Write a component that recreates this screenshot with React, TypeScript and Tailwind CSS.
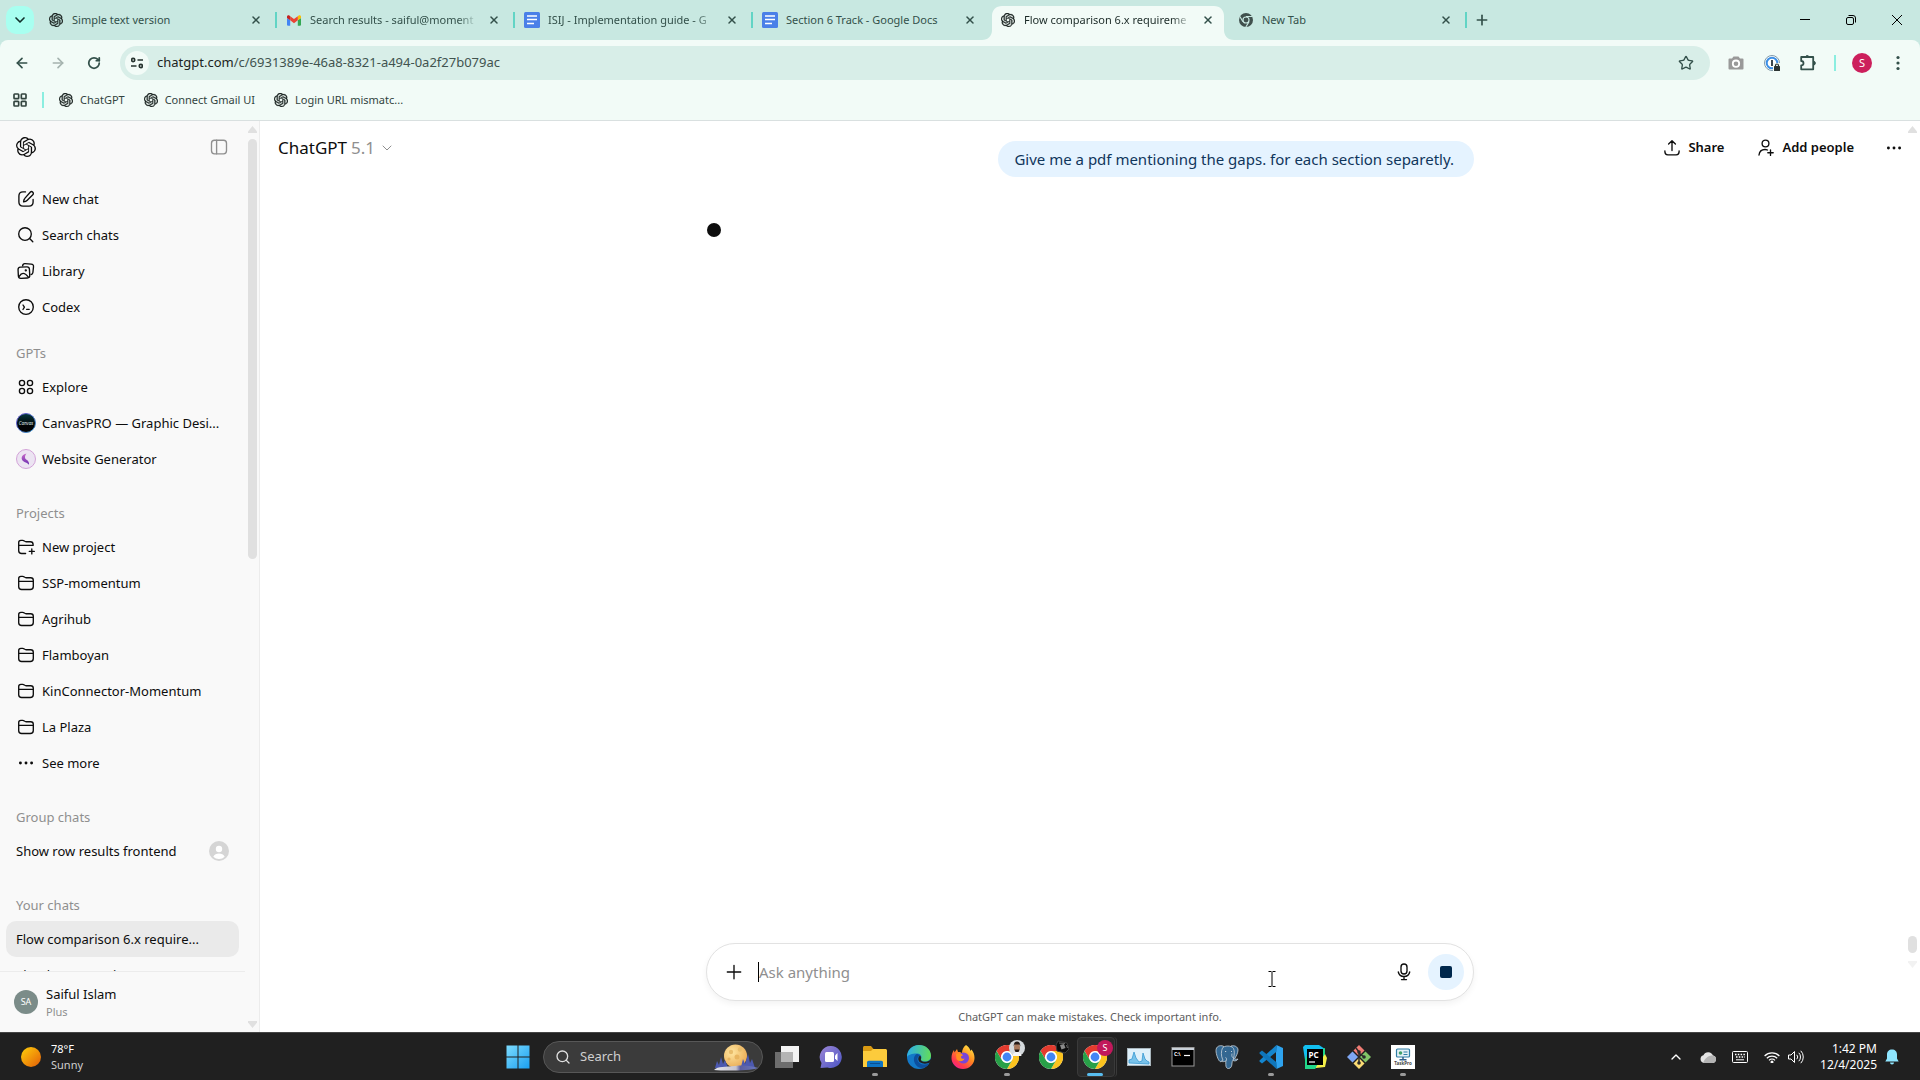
import type { ReactNode } from 'react';
import {
  ArrowLeft,
  ArrowRight,
  ChevronDown,
  ChevronUp,
  LayoutGrid,
  Plus,
  RotateCw,
  Search,
  Star,
  X,
} from 'lucide-react';
import { SiOpenai } from 'react-icons/si';

/* ---------- favicons and brand marks ---------- */

const GmailIcon = () => (
  <svg viewBox="0 0 24 18" className="w-[14px] h-[11px]">
    <path d="M1.6 18h3.9V8.7L0 4.5v11.9C0 17.3.7 18 1.6 18z" fill="#4285f4" />
    <path d="M18.5 18h3.9c.9 0 1.6-.7 1.6-1.6V4.5l-5.5 4.2z" fill="#34a853" />
    <path d="M18.5 1.7v7L24 4.5v-2c0-2.1-2.3-3.2-4-2z" fill="#fbbc04" />
    <path d="M5.5 8.7v-7L12 6.500l6.500-4.800v7L12 13.600z" fill="#ea4335" />
    <path d="M0 2.500v2l5.500 4.200v-7L4 .5c-1.700-1.200-4-.1-4 2z" fill="#c5221f" />
  </svg>
);

const DocsIcon = () => (
  <svg viewBox="0 0 16 16" className="w-4 h-4">
    <rect width="16" height="16" rx="1.500" fill="#4a80e8" />
    <path d="M3 4h10M3 7.500h10M3 11.500h7" stroke="#fff" strokeWidth="1.700" />
  </svg>
);

const MonoChromeIcon = () => (
  <svg viewBox="0 0 24 24" className="w-[14px] h-[14px]">
    <circle cx="12" cy="12" r="12" fill="#40504d" />
    <circle cx="12" cy="12" r="5.200" fill="none" stroke="#c8e8e1" strokeWidth="2" />
    <path d="M12 6h11M6.800 15L1.500 6M17.200 15l-5.500 9" stroke="#c8e8e1" strokeWidth="2" />
  </svg>
);

const OpenAiIcon = ({ large = false }: { large?: boolean }) => (
  <SiOpenai className={large ? 'w-5 h-5 text-[#0d0d0d]' : 'w-[14px] h-[14px] text-[#1d2624] stroke-[#1d2624] stroke-[0.6px]'} />
);

const ChromeLogo = () => (
  <svg viewBox="0 0 24 24" className="w-6 h-6">
    <circle cx="12" cy="12" r="12" fill="#fff" />
    <path d="M12 6h10.400A12 12 0 0 0 1.600 6L6.800 15A6 6 0 0 1 12 6z" fill="#e33b2e" />
    <path d="M17.200 15L12 24A12 12 0 0 0 22.400 6H12a6 6 0 0 1 5.200 9z" fill="#fcc31e" />
    <path d="M6.800 15L1.600 6A12 12 0 0 0 12 24l5.200-9a6 6 0 0 1-10.400 0z" fill="#28a048" />
    <circle cx="12" cy="12" r="5.500" fill="#fff" />
    <circle cx="12" cy="12" r="4.400" fill="#4285f4" />
  </svg>
);

/* ---------- sidebar icons, all on a 20px grid ---------- */

const Glyph = ({ children }: { children: ReactNode }) => (
  <svg
    viewBox="0 0 20 20"
    className="w-5 h-5 shrink-0"
    fill="none"
    stroke="currentColor"
    strokeWidth="1.350"
    strokeLinecap="round"
    strokeLinejoin="round"
  >
    {children}
  </svg>
);

const NewChatIcon = () => (
  <Glyph>
    <path d="M9.500 2.900H7C4.200 2.900 2.900 4.400 2.900 7v6c0 2.700 1.400 4.100 4.100 4.100h6c2.700 0 4.100-1.400 4.100-4.100v-2.500" />
    <path d="M14.200 3.200a1.800 1.800 0 0 1 2.600 2.600L11 11.600c-.8.800-1.900 1.100-3.400 1.300.1-1.500.4-2.700 1.200-3.500z" />
  </Glyph>
);

const SearchIcon = () => (
  <Glyph>
    <circle cx="9" cy="9" r="6.300" />
    <path d="M13.600 13.600l3.200 3.200" />
  </Glyph>
);

const LibraryIcon = () => (
  <Glyph>
    <path d="M6.600 4.800c.2-1.500.9-2.300 2.400-2.200l6.200.5c1.700.2 2.500 1 2.300 2.700l-.600 5.700c-.1 1.200-.7 1.800-1.800 2" />
    <rect x="2.200" y="6" width="11.400" height="11.200" rx="2.500" transform="rotate(-3 8 11.500)" />
    <path d="M3.200 15.300c2.300-3.600 5-4.300 9.200.8" />
    <circle cx="9.800" cy="9.300" r=".5" fill="currentColor" />
  </Glyph>
);

const CodexIcon = () => (
  <Glyph>
    <circle cx="10" cy="10" r="7.300" />
    <path d="M7 8l1.400 2.200L7 12.500M10.600 12.300h2.600" />
  </Glyph>
);

const ExploreIcon = () => (
  <Glyph>
    <circle cx="6" cy="6" r="2.600" />
    <circle cx="14" cy="6" r="2.600" />
    <circle cx="6" cy="14" r="2.600" />
    <circle cx="14" cy="14" r="2.600" />
  </Glyph>
);

const FolderIcon = () => (
  <Glyph>
    <path d="M2.700 13.800V5.600c0-1.400.8-2.200 2.200-2.200h1.800c1.500 0 1.800 1.300 3.300 1.300h4.700c1.700 0 2.600.9 2.600 2.600v6.100c0 2-1 3.100-3.100 3.100H5.600c-1.900 0-2.900-1-2.900-2.700zM2.900 8.400h14.200" />
  </Glyph>
);

const NewFolderIcon = () => (
  <Glyph>
    <path d="M9.600 16.500H5.600c-1.900 0-2.900-1-2.900-2.700V5.600c0-1.400.8-2.200 2.200-2.200h1.800c1.500 0 1.800 1.300 3.300 1.300h4.300c1.900 0 2.800.9 2.800 2.700v1H2.900" />
    <path d="M15.800 11.900v5M13.300 14.400h5" />
  </Glyph>
);

const DotsIcon = () => (
  <svg viewBox="0 0 20 20" className="w-5 h-5 shrink-0" fill="currentColor">
    <circle cx="4.400" cy="10" r="1.450" />
    <circle cx="10" cy="10" r="1.450" />
    <circle cx="15.600" cy="10" r="1.450" />
  </svg>
);

const CanvasProAvatar = () => (
  <svg viewBox="0 0 20 20" className="w-5 h-5 shrink-0">
    <defs>
      <linearGradient id="canvasRing" x1="0" y1="0" x2="1" y2="1">
        <stop offset="0" stopColor="#6a4fd0" />
        <stop offset="1" stopColor="#3c9ccc" />
      </linearGradient>
      <linearGradient id="canvasFill" x1="0" y1="0" x2="0" y2="1">
        <stop offset="0" stopColor="#053a40" />
        <stop offset=".6" stopColor="#020405" />
      </linearGradient>
    </defs>
    <circle cx="10" cy="10" r="9.500" fill="url(#canvasFill)" stroke="url(#canvasRing)" />
    <text x="10" y="11.500" fontSize="4.500" fontStyle="italic" textAnchor="middle" fill="#dfe6e8">
      Canvas
    </text>
  </svg>
);

const WebsiteAvatar = () => (
  <svg viewBox="0 0 20 20" className="w-5 h-5 shrink-0">
    <defs>
      <linearGradient id="swirl" x1="0" y1="0" x2="0" y2="1">
        <stop offset="0" stopColor="#c86cc8" />
        <stop offset="1" stopColor="#6a2ab0" />
      </linearGradient>
    </defs>
    <circle cx="10" cy="10" r="9.500" fill="#ece4f2" stroke="#d3a3d8" />
    <path d="M10.500 4.500C6.500 5.500 4.800 8.200 6.200 11c1.200 2.500 3.900 1.700 6.800 4.800.3-2.500-.8-4-2.400-5-1.900-1.300-2.300-3.200-.1-6.300z" fill="url(#swirl)" />
  </svg>
);

/* ---------- browser chrome ---------- */

const tabs = [
  { title: 'Simple text version', icon: <OpenAiIcon /> },
  { title: 'Search results - saiful@moment', icon: <GmailIcon />, fade: true },
  { title: 'ISIJ - Implementation guide - G', icon: <DocsIcon />, fade: true },
  { title: 'Section 6 Track - Google Docs', icon: <DocsIcon /> },
  { title: 'Flow comparison 6.x requireme', icon: <OpenAiIcon />, active: true, fade: true },
  { title: 'New Tab', icon: <MonoChromeIcon /> },
];

function TabStrip() {
  return (
    <div className="flex items-center h-10 bg-[#c8e8e1] text-[#33504a]">
      <div className="w-[37px] shrink-0 pl-[6px]">
        <button aria-label="Search tabs" className="flex items-center justify-center w-7 h-7 rounded-[10px] bg-[#a8fff0] text-[#12302b]">
          <ChevronDown className="w-4 h-4" strokeWidth={2.5} />
        </button>
      </div>
      {tabs.map((tab, i) => (
        <div key={tab.title} className="relative flex items-center basis-[238px] min-w-0 h-full">
          {tab.active && (
            <svg viewBox="0 0 252 34" preserveAspectRatio="none" className="absolute -left-[7px] bottom-0 w-[252px] h-[34px]">
              <path
                d="M0 34c6 0 10-4 10-10V10C10 4 14 0 20 0h212c6 0 10 4 10 10v14c0 6 4 10 10 10z"
                fill="#f2fbf7"
              />
            </svg>
          )}
          {i > 0 && !tab.active && !tabs[i - 1].active && (
            <span className="absolute left-0 w-[2px] h-4 bg-[#62d4c5]" />
          )}
          <div className="relative flex items-center w-full px-[11px]">
            <span className="flex items-center justify-center w-4 shrink-0">{tab.icon}</span>
            <span
              className={
                'flex-1 ml-2 mr-2 whitespace-nowrap text-[11px] ' +
                (tab.active ? 'text-[#1b2a27] ' : '') +
                (tab.fade ? '[mask-image:linear-gradient(to_right,black_88%,transparent)]' : '')
              }
            >
              {tab.title}
            </span>
            <button aria-label={`Close ${tab.title}`} className="flex items-center justify-center w-4 h-4 shrink-0">
              <X className="w-3 h-3" strokeWidth={3} />
            </button>
          </div>
        </div>
      ))}
      <span className="w-[2px] h-4 bg-[#62d4c5]" />
      <button aria-label="New tab" className="flex items-center justify-center w-[30px] h-7">
        <Plus className="w-4 h-4" strokeWidth={2.5} />
      </button>
      <div className="flex ml-auto h-full text-black">
        <button aria-label="Minimize" className="flex items-center justify-center w-[46px]">
          <svg viewBox="0 0 10 10" className="w-[10px] h-[10px]"><path d="M0 4.500h10" stroke="currentColor" /></svg>
        </button>
        <button aria-label="Restore" className="flex items-center justify-center w-[46px]">
          <svg viewBox="0 0 10 10" className="w-[10px] h-[10px]" fill="none" stroke="currentColor">
            <rect x=".5" y="2.500" width="7" height="7" rx="1.500" />
            <path d="M2.500.5h4.500a2.500 2.500 0 0 1 2.500 2.500v4.500" />
          </svg>
        </button>
        <button aria-label="Close window" className="flex items-center justify-center w-[46px]">
          <svg viewBox="0 0 10 10" className="w-[10px] h-[10px]"><path d="M0 0l10 10M10 0L0 10" stroke="currentColor" /></svg>
        </button>
      </div>
    </div>
  );
}

function Toolbar() {
  return (
    <div className="flex items-center h-[46px] px-1 bg-[#f2fbf7] rounded-t-[8px] text-[#33504a]">
      <button aria-label="Back" className="flex justify-center w-9"><ArrowLeft className="w-4 h-4" strokeWidth={2.5} /></button>
      <button aria-label="Forward" className="flex justify-center w-9 text-[#a5b3af]"><ArrowRight className="w-4 h-4" strokeWidth={2.5} /></button>
      <button aria-label="Reload" className="flex justify-center w-9"><RotateCw className="w-[14px] h-[14px]" strokeWidth={3} /></button>
      <div className="flex items-center flex-1 h-[34px] ml-2 px-[5px] rounded-full bg-[#d8eee8]">
        <button aria-label="Site information" className="flex items-center justify-center w-6 h-6 rounded-full bg-[#f2fbf7]">
          <svg viewBox="0 0 12 12" className="w-3 h-3" fill="none" stroke="#26332f" strokeWidth="1.600">
            <circle cx="2.200" cy="3" r="1.600" />
            <path d="M6.500 3H12M0 9h5.500" />
            <circle cx="9.800" cy="9" r="1.600" />
          </svg>
        </button>
        <span className="ml-2 text-[13px] text-[#41534f]">
          <span className="text-[#1b2321]">chatgpt.com</span>/c/6931389e-46a8-8321-a494-0a2f27b079ac
        </span>
        <button aria-label="Bookmark this tab" className="ml-auto mr-[11px]"><Star className="w-4 h-4" strokeWidth={2} /></button>
      </div>
      <div className="flex items-center ml-2">
        <button aria-label="Screenshot" className="flex justify-center w-9">
          <svg viewBox="0 0 16 14" className="w-4 h-[14px]">
            <path d="M1.500 2.500H4L5.500.5h5l1.500 2h2.500A1 1 0 0 1 15.500 3.500v9a1 1 0 0 1-1 1h-13a1 1 0 0 1-1-1v-9a1 1 0 0 1 1-1z" fill="#999" />
            <circle cx="8" cy="7.700" r="3.200" fill="none" stroke="#fff" strokeWidth="1.800" />
          </svg>
        </button>
        <button aria-label="Password manager" className="flex justify-center w-9">
          <svg viewBox="0 0 16 16" className="w-4 h-4">
            <circle cx="8" cy="8" r="7.500" fill="#fff" stroke="#7f99a8" />
            <circle cx="8" cy="8" r="5.300" fill="none" stroke="#3c8fe6" strokeWidth="2" />
            <path d="M8 5v6" stroke="#26333c" strokeWidth="1.800" />
            <rect x="9" y="8" width="8" height="9" fill="#f2fbf7" />
            <rect x="10" y="11" width="6" height="5" rx=".6" fill="#2c3432" />
            <path d="M11.500 11.500v-1a1.500 1.500 0 0 1 3 0v1" fill="none" stroke="#2c3432" strokeWidth="1.200" />
          </svg>
        </button>
        <button aria-label="Extensions" className="flex justify-center w-9">
          <svg viewBox="0 0 18 18" className="w-[18px] h-[18px]">
            <path
              d="M2.200 3h12v12.300h-12v-4c1.600 0 2.300-.9 2.300-2.100 0-1.300-.7-2.200-2.300-2.200z"
              fill="none" stroke="currentColor" strokeWidth="1.800" strokeLinejoin="round"
            />
            <path d="M6.500 3a1.800 1.800 0 0 1 3.500 0zM14.500 7.300a1.800 1.800 0 0 1 0 3.700z" fill="currentColor" stroke="currentColor" />
          </svg>
        </button>
        <span className="w-[2px] h-4 mx-2 bg-[#8beee0]" />
        <button aria-label="Profile" className="flex justify-center w-9">
          <span className="flex items-center justify-center w-5 h-5 rounded-full bg-[#cc1f5c] text-[11px] text-white">S</span>
        </button>
        <button aria-label="Menu" className="flex justify-center w-9">
          <svg viewBox="0 0 4 16" className="w-1 h-4" fill="currentColor">
            <circle cx="2" cy="2.500" r="1.600" /><circle cx="2" cy="8" r="1.600" /><circle cx="2" cy="13.500" r="1.600" />
          </svg>
        </button>
      </div>
    </div>
  );
}

const bookmarks = ['ChatGPT', 'Connect Gmail UI', 'Login URL mismatc...'];

function BookmarksBar() {
  return (
    <div className="flex items-center h-[35px] pb-[6px] pl-3 bg-[#f2fbf7] border-b border-[#d9e0e0] text-[11px] text-[#33443f]">
      <button aria-label="All apps"><LayoutGrid className="w-4 h-4" strokeWidth={2.5} /></button>
      <span className="w-[2px] h-4 mx-[14px] bg-[#8beee0]" />
      <div className="flex items-center gap-[19px] ml-px">
        {bookmarks.map((name) => (
          <a key={name} href="#" className="flex items-center gap-[7px]">
            <OpenAiIcon />
            {name}
          </a>
        ))}
      </div>
    </div>
  );
}

/* ---------- ChatGPT page ---------- */

const navItems = [
  { label: 'New chat', icon: <NewChatIcon /> },
  { label: 'Search chats', icon: <SearchIcon /> },
  { label: 'Library', icon: <LibraryIcon /> },
  { label: 'Codex', icon: <CodexIcon /> },
];

const gptItems = [
  { label: 'Explore', icon: <ExploreIcon /> },
  { label: 'CanvasPRO — Graphic Desi...', icon: <CanvasProAvatar /> },
  { label: 'Website Generator', icon: <WebsiteAvatar /> },
];

const projectItems = [
  { label: 'New project', icon: <NewFolderIcon /> },
  { label: 'SSP-momentum', icon: <FolderIcon /> },
  { label: 'Agrihub', icon: <FolderIcon /> },
  { label: 'Flamboyan', icon: <FolderIcon /> },
  { label: 'KinConnector-Momentum', icon: <FolderIcon /> },
  { label: 'La Plaza', icon: <FolderIcon /> },
  { label: 'See more', icon: <DotsIcon /> },
];

type ItemProps = { label: string; icon?: ReactNode; trailing?: ReactNode; active?: boolean };

const SidebarItem = ({ label, icon, trailing, active }: ItemProps) => (
  <a
    href="#"
    className={`flex items-center gap-[6px] h-9 shrink-0 px-[10px] rounded-[10px] whitespace-nowrap ${active ? 'bg-[#eaeaea]' : ''}`}
  >
    {icon}
    <span className="pt-px">{label}</span>
    {trailing && <span className="ml-auto">{trailing}</span>}
  </a>
);

const SectionLabel = ({ children }: { children: ReactNode }) => (
  <h2 className="flex items-center h-8 shrink-0 px-[10px] pt-px text-[#8f8f8f]">{children}</h2>
);

const ArrowUpMark = () => (
  <svg viewBox="0 0 9 7" className="w-[9px] h-[7px]"><path d="M4.500 0L9 5.500V7H0V5.500z" fill="#e0e0e0" /></svg>
);
const ArrowDownMark = () => (
  <svg viewBox="0 0 9 7" className="w-[9px] h-[7px]"><path d="M4.500 7L9 1.500V0H0v1.500z" fill="#e0e0e0" /></svg>
);

function Sidebar() {
  return (
    <aside className="flex w-[260px] shrink-0 bg-[#f9f9f9] border-r border-[#ececec] text-[13px] text-[#0d0d0d]">
      <div className="flex flex-col flex-1 min-w-0 min-h-0">
        <div className="flex items-center justify-between h-[52px] shrink-0 px-4">
          <OpenAiIcon large />
          <button aria-label="Close sidebar" className="text-[#8f8f8f]">
            <Glyph>
              <rect x="2.500" y="3.200" width="15" height="13.600" rx="3" />
              <path d="M7.600 3.200v13.600" />
            </Glyph>
          </button>
        </div>
        <nav className="flex flex-col flex-1 min-h-0 overflow-hidden pt-2 px-[6px]">
          {navItems.map((item) => <SidebarItem key={item.label} {...item} />)}
          <div className="h-3 shrink-0" />
          <SectionLabel>GPTs</SectionLabel>
          {gptItems.map((item) => <SidebarItem key={item.label} {...item} />)}
          <div className="h-5 shrink-0" />
          <SectionLabel>Projects</SectionLabel>
          {projectItems.map((item) => <SidebarItem key={item.label} {...item} />)}
          <div className="h-5 shrink-0" />
          <SectionLabel>Group chats</SectionLabel>
          <SidebarItem
            label="Show row results frontend"
            trailing={
              <svg viewBox="0 0 20 20" className="w-5 h-5">
                <circle cx="10" cy="10" r="10" fill="#d5d5d5" />
                <circle cx="10" cy="8" r="3.200" fill="#fff" />
                <path d="M4.300 15.800c1-2.300 3.200-3.200 5.700-3.200s4.700.9 5.700 3.200A8 8 0 0 1 10 18a8 8 0 0 1-5.700-2.200z" fill="#fff" />
              </svg>
            }
          />
          <div className="h-5 shrink-0" />
          <SectionLabel>Your chats</SectionLabel>
          <SidebarItem label="Flow comparison 6.x require..." active />
          <SidebarItem label="Simple text version" />
        </nav>
        <div className="flex items-center gap-2 h-[61px] shrink-0 pl-[14px] border-t border-[#ececec]">
          <span className="flex items-center justify-center w-6 h-6 rounded-full bg-[#7b8c89] text-[9px] text-white">SA</span>
          <div>
            <p className="leading-5">Saiful Islam</p>
            <p className="text-[11px] leading-4 text-[#8f8f8f]">Plus</p>
          </div>
        </div>
      </div>
      <div className="flex flex-col items-center w-[14px] shrink-0 pt-[5px] pb-1">
        <ArrowUpMark />
        <div className="flex-1 my-[6px]">
          <div className="w-[9px] h-[48%] rounded-full bg-[#e0e0e0]" />
        </div>
        <ArrowDownMark />
      </div>
    </aside>
  );
}

function Conversation() {
  return (
    <main className="relative flex flex-col flex-1 min-w-0 bg-white text-[#0d0d0d]">
      <header className="flex items-center justify-between h-[53px] shrink-0 pl-[18px] pr-4">
        <button className="flex items-center gap-1 text-[17px]">
          ChatGPT <span className="text-[#8f8f8f]">5.1</span>
          <ChevronDown className="w-4 h-4 text-[#8f8f8f]" strokeWidth={1.5} />
        </button>
        <div className="flex items-center text-[13px] font-semibold">
          <button className="flex items-center gap-[6px] mr-8">
            <Glyph>
              <path d="M10 12.500V3M6.600 6.100L10 2.800l3.400 3.300M2.900 12.800v1c0 2 .9 3 2.900 3h8.400c2 0 2.900-1 2.900-3v-1" />
            </Glyph>
            Share
          </button>
          <button className="flex items-center gap-[6px] mr-[30px]">
            <Glyph>
              <circle cx="9.500" cy="5.500" r="3.400" />
              <path d="M3 17c.4-3.500 2.800-5.500 6-5.500 1 0 1.800.2 2.500.5M14.500 12v5.400M11.800 14.700h5.400" />
            </Glyph>
            Add people
          </button>
          <button aria-label="More options"><DotsIcon /></button>
        </div>
      </header>

      <div className="flex flex-col flex-1 w-full max-w-[768px] mx-auto -mt-[33px]">
        <p className="self-end h-9 pl-4 pr-5 rounded-[18px] bg-[#e5f3ff] text-[15px] leading-9 text-[#10365c]">
          Give me a pdf mentioning the gaps. for each section separetly.
        </p>
        <span className="w-[14px] h-[14px] mt-[46px] ml-px rounded-full bg-[#0d0d0d]" />
      </div>

      <div className="w-full max-w-[768px] mx-auto">
        <form className="flex items-center h-[58px] pl-[17px] pr-[9px] rounded-full border border-[#e2e2e2] bg-white shadow-[0_3px_6px_rgba(0,0,0,0.05)]">
          <button type="button" aria-label="Add files"><Glyph><path d="M10 3.300v13.400M3.300 10h13.400" /></Glyph></button>
          <span className="w-px h-5 ml-[14px] bg-black" />
          <input
            type="text"
            aria-label="Ask anything"
            placeholder="Ask anything"
            className="flex-1 min-w-0 text-[15px] outline-none placeholder:text-[#8f8f8f]"
          />
          <button type="button" aria-label="Dictate" className="mr-[14px]">
            <Glyph>
              <rect x="7" y="2" width="6" height="10" rx="3" />
              <path d="M4.300 10c.6 2.900 2.800 4.500 5.700 4.500s5.100-1.600 5.700-4.500M10 14.500v3M7.500 17.600h5" />
            </Glyph>
          </button>
          <button type="button" aria-label="Stop" className="flex items-center justify-center w-9 h-9 rounded-full bg-[#e5f3ff]">
            <span className="w-3 h-3 rounded-[2px] bg-[#00284d]" />
          </button>
        </form>
        <p className="h-[31px] text-center text-[11px] leading-8 text-[#5d5d5d]">
          ChatGPT can make mistakes. Check important info.
        </p>
      </div>

      {/* page scrollbar */}
      <div className="absolute right-[3px] top-0 bottom-0 flex flex-col items-center py-[5px]">
        <ArrowUpMark />
        <span className="w-[9px] h-[17px] mt-auto mb-2 rounded-full bg-[#e0e0e0]" />
        <span className="mb-[59px] opacity-40"><ArrowDownMark /></span>
      </div>

      {/* text cursor */}
      <svg viewBox="0 0 8 16" className="absolute right-[644px] bottom-[45px] w-2 h-4" fill="none" stroke="#000">
        <path d="M.5.5h3M4.500.5h3M4 1v14M.5 15.500h3M4.500 15.500h3" />
      </svg>
    </main>
  );
}

/* ---------- taskbar ---------- */

const WindowsLogo = () => (
  <svg viewBox="0 0 24 24" className="w-6 h-6">
    <defs>
      <linearGradient id="win" x1="0" y1="0" x2="1" y2="1">
        <stop offset="0" stopColor="#7ddcff" />
        <stop offset="1" stopColor="#1a9ff0" />
      </linearGradient>
    </defs>
    <path d="M.5.500h11v11H.5zM12.500.500h11v11h-11zM.5 12.500h11v11H.5zM12.500 12.500h11v11h-11z" fill="url(#win)" />
  </svg>
);

const MoonArt = () => (
  <svg viewBox="0 0 44 28" className="w-11 h-7">
    <defs>
      <radialGradient id="moon" cx=".35" cy=".35" r=".75">
        <stop offset="0" stopColor="#ffe6a0" />
        <stop offset="1" stopColor="#e8a850" />
      </radialGradient>
      <linearGradient id="snow" x1="0" x2="1">
        <stop offset="0" stopColor="#e6e6ee" />
        <stop offset=".5" stopColor="#c5c3ce" />
        <stop offset=".6" stopColor="#5b5fa0" />
        <stop offset="1" stopColor="#6a78c0" />
      </linearGradient>
    </defs>
    <circle cx="21.500" cy="13" r="11.500" fill="url(#moon)" />
    <circle cx="17" cy="9" r="2.200" fill="#e9bd6b" />
    <circle cx="26" cy="6.500" r="2.200" fill="#e9bd6b" />
    <circle cx="23" cy="14" r="2.500" fill="#e8b560" />
    <circle cx="15" cy="16" r="1.600" fill="#e8b560" />
    <path d="M1 25l2-7 2 4 2-8 2 7 2-4 3 8zM27 24l2-8 2 5 3-10 2 9 2-4 3 9-4 1z" fill="#4c59b0" />
    <path d="M0 27c4-4 11-3 21-4s17 0 23 2c-9 3-34 3-44 2z" fill="url(#snow)" />
  </svg>
);

const TaskViewIcon = () => (
  <svg viewBox="0 0 24 24" className="w-6 h-6">
    <rect x="6" y="1" width="18" height="16" fill="#f2f2f2" />
    <rect y="7" width="18" height="16" fill="#6d6d6d" />
    <path d="M6 7h12v10H6z" fill="#b4b4b4" />
  </svg>
);

const VideoChatIcon = () => (
  <svg viewBox="0 0 24 24" className="w-6 h-6">
    <defs>
      <linearGradient id="meet" x1="0" y1="0" x2="1" y2="1">
        <stop offset="0" stopColor="#9c86d6" />
        <stop offset="1" stopColor="#4b55c4" />
      </linearGradient>
    </defs>
    <path d="M12 1a11 11 0 1 1-3.500 21.500L1.500 23l1-5A11 11 0 0 1 12 1z" fill="url(#meet)" />
    <rect x="6" y="7" width="9" height="10" rx="1.500" fill="#fff" />
    <path d="M16 10.500l2.500-2.500v8L16 13.500z" fill="#fff" />
  </svg>
);

const ExplorerIcon = () => (
  <svg viewBox="0 0 24 24" className="w-6 h-6">
    <path d="M0 2.500C0 1.700.7 1 1.500 1h6.500l2.500 3V8H0z" fill="#d99a12" />
    <path d="M0 6h8l2-2h12.500c.8 0 1.500.7 1.500 1.500V22H0z" fill="#fccb3c" />
    <path d="M4 22v-4.500c0-1 .7-1.700 1.700-1.700h12.600c1 0 1.700.7 1.700 1.700V22z" fill="#0d74c4" />
    <path d="M7 18.500h10" stroke="#0a4f91" />
  </svg>
);

const EdgeIcon = () => (
  <svg viewBox="0 0 24 24" className="w-6 h-6">
    <defs>
      <linearGradient id="edgeTop" x1="0" y1=".4" x2="1" y2=".5">
        <stop offset="0" stopColor="#2daee8" />
        <stop offset="1" stopColor="#62dc5a" />
      </linearGradient>
    </defs>
    <circle cx="12" cy="12" r="12" fill="#1379c8" />
    <path d="M0 12C0 5 5 0 12 0s12 5 12 10.500c0 4-3 6-6 6-3.500 0-4.500-1.500-4-2.500 1.500-3.500-1-5.500-4.500-5.500C5 8.500 1 10 0 12z" fill="url(#edgeTop)" />
    <path d="M9.500 9c-3.500 2-4 9 1.500 13 4 2.500 9 .5 11-3.500-5 2.500-12 .5-11.500-5 .2-1.500 1-2.300 2.500-3C12 9.500 11 9 9.500 9z" fill="#0c4f9e" />
    <path d="M13 10.500c-2 1.500-2.500 4.500 0 6.800 3 2 7.500 1.500 10 .2l1-1.500V14c-2 2.300-4.500 2.800-6 2.800-3.500 0-4.500-1.700-4-2.800.4-1.200.2-2.500-1-3.500z" fill="#202020" />
  </svg>
);

const FirefoxIcon = () => (
  <svg viewBox="0 0 24 24" className="w-6 h-6">
    <defs>
      <linearGradient id="fox" x1=".9" y1="0" x2=".2" y2="1">
        <stop offset="0" stopColor="#fff04a" />
        <stop offset=".45" stopColor="#ff8a1f" />
        <stop offset=".8" stopColor="#ff3750" />
        <stop offset="1" stopColor="#f0209a" />
      </linearGradient>
    </defs>
    <path d="M15 0c3 2 4 4 4.500 6l1-1.500C22.500 7 23.500 10 23.500 13A11.500 11 0 0 1 .5 13c0-3 .8-6 2.500-8l.5 2.500L6 4l1 3c2 0 3.500.5 4 1C11 5 12.500 1.500 15 0z" fill="url(#fox)" />
    <circle cx="12.500" cy="13" r="5.500" fill="#7a45d8" />
    <path d="M5 9c3-1.500 6-.5 7 1.500-1.500 0-2 1-2 1.500 0 1 1 2.500 3.500 1.500-1 3.500-6 3.500-8 .5z" fill="#ff8f1f" />
  </svg>
);

const MonitorGraphIcon = () => (
  <svg viewBox="0 0 24 24" className="w-6 h-6">
    <rect x=".5" y="3.500" width="23" height="17" fill="#dff0fa" stroke="#a9b6bd" />
    <path d="M2 18v-3l3-1 2-7 2 6 3 4 3-1 1-8 2 6 2 2 2 1v2z" fill="#78c2ea" stroke="#3798d2" strokeWidth=".8" />
  </svg>
);

const TerminalIcon = () => (
  <svg viewBox="0 0 24 24" className="w-6 h-6">
    <rect x="1" y="2.500" width="22" height="18.500" fill="#000" stroke="#9a9a9a" />
    <path d="M1 4h22" stroke="#c8d0d8" strokeWidth="2" />
    <text x="3" y="11" fontSize="5" fontWeight="700" fill="#fff">C:\</text>
    <path d="M13 10.500h6" stroke="#fff" strokeWidth="1.200" />
  </svg>
);

const PostgresIcon = () => (
  <svg viewBox="0 0 24 24" className="w-6 h-6" fill="#336791" stroke="#c9d3dc" strokeWidth=".8" strokeLinejoin="round">
    <path d="M8.500 1.200C4.500-.3 1 1.500 1 5.500c0 3.500 2 9.500 4 11 1 .7 2-.5 3.500-2.500z" />
    <path d="M16 1c3.500-1 7 .8 7 4 0 3-2 6.500-3.500 9 1 .5 2.300.3 3.500 0-.8 1.500-2.500 2.200-4.500 1.800z" />
    <path d="M7.500 3c1.500-2.500 9-3 11 .5 1.200 2.500.8 6 .2 9.500-.4 2-1.700 3-1.700 5 0 3-1 5.300-3.200 5.500-2.300.2-3-1.500-3-4v-3.500c-1.500.8-3.300.8-4.300.3 1.500-.5 1.700-1.300 1-2.300C6 11 6 6 7.500 3z" />
    <path d="M11 16c1-1.500.5-3-.5-3.700M18.500 13c-1.500-.5-2-2-1.500-4.500" fill="none" />
    <path d="M10 6.500h1.200M16 6.500h1" strokeWidth="1.200" />
  </svg>
);

const VsCodeIcon = () => (
  <svg viewBox="0 0 24 24" className="w-6 h-6">
    <path d="M17.500 0L24 3v18l-6.500 3-.5-6.500V6.500z" fill="#2ea3ef" />
    <path d="M17.500 0v6.800L3 18.500l-2.500-2L.5 15.500z" fill="#1486cf" />
    <path d="M17.500 24v-6.800L3 5.500l-2.500 2v1z" fill="#0f76bb" />
  </svg>
);

const PyCharmIcon = () => (
  <svg viewBox="0 0 24 24" className="w-6 h-6">
    <path d="M0 2l2-2h14l6 4-3 8L2 15z" fill="#12bff0" />
    <path d="M2 14l2-4 18-7v10L12 24H2z" fill="#21d789" />
    <path d="M13 22l9-13 2 4-2 9-9 1z" fill="#f4ee48" />
    <rect x="4" y="4" width="16" height="16" fill="#000" />
    <text x="5.500" y="12.500" fontSize="8" fontWeight="700" fill="#fff">PC</text>
    <path d="M6 17h6" stroke="#fff" strokeWidth="1.200" />
  </svg>
);

const GitIcon = () => (
  <svg viewBox="0 0 24 24" className="w-6 h-6">
    <path d="M12 0l5.500 5.500L12 11 6.500 5.500z" fill="#f07c74" />
    <path d="M5.500 6.500L11 12l-5.500 5.500L0 12z" fill="#7ea6f2" />
    <path d="M18.500 6.500L24 12l-5.500 5.500L13 12z" fill="#82c568" />
    <path d="M12 13l5.500 5.500L12 24l-5.500-5.500z" fill="#fbdc74" />
    <path d="M9 3l3 4v11M12 8l5 4" stroke="#2a2a2a" strokeWidth="1.500" fill="none" />
    <circle cx="12" cy="7" r="1.800" fill="#2a2a2a" />
    <circle cx="17" cy="12" r="1.800" fill="#2a2a2a" />
    <circle cx="12" cy="18" r="1.800" fill="#2a2a2a" />
  </svg>
);

const TaskProIcon = () => (
  <svg viewBox="0 0 24 24" className="w-6 h-6">
    <rect width="24" height="24" fill="#fff" />
    <rect x="5.500" y="4" width="13" height="8" rx="1" fill="#e4f1f6" stroke="#2f7ea6" strokeWidth="1.200" />
    <circle cx="9.500" cy="8" r="1.800" fill="#3fa06a" />
    <path d="M12.500 7h4M12.500 9.500h4" stroke="#2f7ea6" strokeWidth="1.200" />
    <path d="M12 12v2M8.500 14.800h7" stroke="#2f5f8a" strokeWidth="1.500" />
    <text x="12" y="19.800" fontSize="4.500" fontWeight="700" textAnchor="middle" fill="#444">TaskPro</text>
  </svg>
);

const PortraitBadge = () => (
  <svg viewBox="0 0 16 16" className="w-4 h-4">
    <circle cx="8" cy="8" r="8" fill="#d5dadd" />
    <path d="M3.500 16c.5-3 2-4 4.500-4s4 1 4.500 4z" fill="#f4f4f4" />
    <ellipse cx="8" cy="7.500" rx="3" ry="4.300" fill="#a8795c" />
    <path d="M4.700 6.500C4.500 3 6 1.500 8 1.500s3.500 1.500 3.300 5L10.500 4.500h-5zM5.500 9.500h5L9.500 12h-3z" fill="#241a16" />
  </svg>
);

const CubeBadge = () => (
  <svg viewBox="0 0 14 14" className="w-[14px] h-[14px]">
    <path d="M3 1l9 2 2 6-4 4-8-2L1 5z" fill="#0c0c0c" stroke="#3d3d3d" />
    <path d="M5 5l4-1 1.500 4-4 1.500z" fill="#8a8a8a" />
    <path d="M4 3l6 .5M11.500 5l1 3" stroke="#6a6a6a" />
  </svg>
);

type TaskbarApp = { name: string; icon: ReactNode; badge?: ReactNode; running?: boolean; focused?: boolean };

const apps: TaskbarApp[] = [
  { name: 'Task view', icon: <TaskViewIcon /> },
  { name: 'Chat', icon: <VideoChatIcon /> },
  { name: 'File Explorer', icon: <ExplorerIcon />, running: true },
  { name: 'Edge', icon: <EdgeIcon /> },
  { name: 'Firefox', icon: <FirefoxIcon /> },
  { name: 'Chrome, personal', icon: <ChromeLogo />, badge: <PortraitBadge />, running: true },
  { name: 'Chrome, guest', icon: <ChromeLogo />, badge: <CubeBadge /> },
  {
    name: 'Chrome, work',
    icon: <ChromeLogo />,
    badge: <span className="flex items-center justify-center w-4 h-4 rounded-full bg-[#c2185b] text-[9px] text-white">S</span>,
    focused: true,
  },
  { name: 'Resource monitor', icon: <MonitorGraphIcon /> },
  { name: 'Command prompt', icon: <TerminalIcon /> },
  { name: 'pgAdmin', icon: <PostgresIcon /> },
  { name: 'VS Code', icon: <VsCodeIcon />, running: true },
  { name: 'PyCharm', icon: <PyCharmIcon /> },
  { name: 'Git', icon: <GitIcon /> },
  { name: 'TaskPro', icon: <TaskProIcon />, running: true },
];

function Taskbar() {
  return (
    <footer className="grid grid-cols-[1fr_auto_1fr] items-center h-12 shrink-0 bg-[#202020] border-t border-[#454545] text-[11px] text-white">
      <div className="flex items-center gap-[10px] pl-[21px] pb-px">
        <span className="w-5 h-5 rounded-full bg-linear-to-br from-[#fdd00a] to-[#e05a08]" />
        <div className="leading-4">
          <p>78°F</p>
          <p className="text-[#cfcfcf]">Sunny</p>
        </div>
      </div>

      <div className="flex items-center pl-px">
        <button aria-label="Start" className="flex justify-center w-11"><WindowsLogo /></button>
        <div className="flex items-center w-[220px] h-8 ml-[3px] mr-[2px] pl-[11px] pr-1 rounded-full border border-[#575757] bg-[#3b3b3b]">
          <Search className="w-4 h-4 text-[#e0e0e0]" />
          <input
            type="text"
            aria-label="Search"
            placeholder="Search"
            className="flex-1 min-w-0 ml-[9px] text-[13px] outline-none placeholder:text-[#cfcfcf]"
          />
          <MoonArt />
        </div>
        {apps.map((app) => (
          <button key={app.name} aria-label={app.name} className="relative flex items-center justify-center w-11 h-12">
            {app.focused && (
              <>
                <span className="absolute left-1 top-1 w-[38px] h-10 rounded-[4px] border border-[#3a3a3a] bg-[#2b2b2b]" />
                <span className="absolute right-0 top-1 w-1 h-10 rounded-r-[4px] border-r border-[#3a3a3a]" />
              </>
            )}
            <span className="relative">{app.icon}</span>
            {app.badge && <span className="absolute right-1 top-[7px]">{app.badge}</span>}
            {app.running && <span className="absolute bottom-[5px] w-[6px] h-[3px] rounded-full bg-[#9a9a9a]" />}
            {app.focused && <span className="absolute bottom-[5px] w-4 h-[3px] rounded-full bg-[#58bdf0]" />}
          </button>
        ))}
      </div>

      <div className="flex items-center justify-end pr-[21px] pb-px">
        <ChevronUp className="w-4 h-4" />
        <svg viewBox="0 0 16 12" className="w-4 h-3 ml-4">
          <path d="M4 12a4 4 0 0 1-.6-7.800A5.200 5.200 0 0 1 13 4.500 3.800 3.800 0 0 1 12.500 12z" fill="#e4e4e4" />
          <path d="M3 12c2-5 5-7.500 10-7.500A3.800 3.800 0 0 1 12.500 12z" fill="#b3b3b3" />
        </svg>
        <svg viewBox="0 0 16 12" className="w-4 h-3 ml-4" fill="none" stroke="#fff">
          <rect x=".5" y=".5" width="15" height="11" rx="1" />
          <path d="M3 3.500h10M4 6h9" strokeDasharray="1.500 1.300" strokeWidth="1.300" />
          <path d="M4 8.800h8" />
        </svg>
        <svg viewBox="0 0 16 12" className="w-4 h-3 ml-4" fill="none" stroke="#fff" strokeWidth="1.200">
          <path d="M.6 5a10.500 10.500 0 0 1 14.800 0M2.800 7.200a7.400 7.400 0 0 1 10.400 0M5 9.400a4.300 4.300 0 0 1 6 0" />
          <circle cx="8" cy="11" r=".9" fill="#fff" />
        </svg>
        <svg viewBox="0 0 16 14" className="w-4 h-[14px] ml-2" fill="none" stroke="#fff">
          <path d="M.5 5h2.500L6.500 1.500v11L3 9H.5zM8.800 4.800a3.300 3.300 0 0 1 0 4.400M10.800 2.800a6 6 0 0 1 0 8.400M12.800.8a9 9 0 0 1 0 12.400" />
        </svg>
        <div className="ml-4 text-right text-[12px] leading-4">
          <p>1:42 PM</p>
          <p>12/4/2025</p>
        </div>
        <svg viewBox="0 0 14 16" className="w-[14px] h-4 ml-2" fill="#8fe6ff">
          <path d="M7 .5c3 0 5 2 5 5v4l1.700 3H.3L2 9.500v-4c0-3 2-5 5-5zM5 13.500h4a2 2 0 0 1-4 0z" />
        </svg>
      </div>
    </footer>
  );
}

export default function App() {
  return (
    <div className="flex flex-col h-screen overflow-hidden font-['Noto_Sans',sans-serif]">
      <div className="shrink-0 bg-[#c8e8e1]">
        <TabStrip />
        <Toolbar />
        <BookmarksBar />
      </div>
      <div className="flex flex-1 min-h-0">
        <Sidebar />
        <Conversation />
      </div>
      <Taskbar />
    </div>
  );
}
